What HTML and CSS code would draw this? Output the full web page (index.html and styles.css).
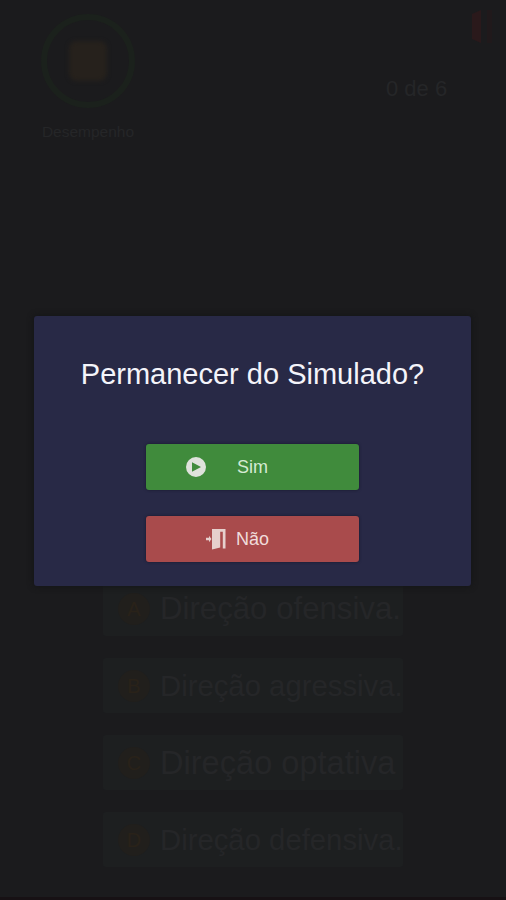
FILE: index.html
```html
<!DOCTYPE html>
<html lang="pt-BR">

<head>
    <meta charset="UTF-8">
    <meta name="viewport" content="width=device-width, initial-scale=1.0">
    <title>Simulado</title>
    <link rel="stylesheet" href="styles.css">
</head>

<body>
    <div class="quiz">
        <header class="top">
            <div class="score">
                <div class="ring">
                    <div class="badge"></div>
                </div>
                <span class="scoreLabel">Desempenho</span>
            </div>
            <div class="status">
                <svg class="exit" viewBox="0 0 24 40">
                    <path d="M2 8l9-4v33l-9-4z" />
                    <path class="frame" d="M17 4h5v33h-5z" />
                </svg>
                <span class="counter">0 de 6</span>
            </div>
        </header>
        <div class="answers">
            <div class="answer"><span class="letter">A</span>Direção ofensiva.</div>
            <div class="answer long"><span class="letter">B</span>Direção agressiva.</div>
            <div class="answer short"><span class="letter">C</span>Direção optativa</div>
            <div class="answer long"><span class="letter">D</span>Direção defensiva.</div>
        </div>
    </div>

    <!-- Exit confirmation -->
    <div class="modal">
        <h1>Permanecer do Simulado?</h1>
        <button class="btn btnYes">
            <svg class="icon play" viewBox="0 0 20 20">
                <path fill-rule="evenodd" d="M10 0a10 10 0 1 0 0 20a10 10 0 1 0 0-20zM6 5.2v9.6l9-4.8z" />
            </svg>
            <span>Sim</span>
        </button>
        <button class="btn btnNo">
            <svg class="icon door" viewBox="0 0 20 22">
                <path d="M0 9.8h3v-2l2.5 3.3-2.5 3.2v-2H0z" />
                <path d="M6 1h13.5v19.5h-2.7V3.8h-2.6v15.8L6 21.5z" />
            </svg>
            <span>Não</span>
        </button>
    </div>
</body>

</html>
```
FILE: styles.css
```css
* {
    box-sizing: border-box;
}

body {
    margin: 0;
    background-color: #1b1b1d;
    color: #252628;
    font-family: "Liberation Sans", Arial, sans-serif;
}

.quiz {
    height: 900px;
    display: flex;
    flex-direction: column;
    justify-content: space-between;
    padding: 6px 12px 30px 40px;
    border-bottom: 3px solid #171114;
    overflow: hidden;
}

.top {
    display: flex;
    justify-content: space-between;
}

.score {
    width: 96px;
    display: flex;
    flex-direction: column;
    align-items: center;
    padding-top: 8px;
}

.ring {
    width: 94px;
    height: 94px;
    display: flex;
    align-items: center;
    justify-content: center;
    border: 6px solid #1b211c;
    border-radius: 50%;
}

.badge {
    width: 38px;
    height: 40px;
    background-color: #26211c;
    border-radius: 8px;
    filter: blur(2px);
}

.scoreLabel {
    margin-top: 15px;
    font-size: 15.5px;
    line-height: 18px;
}

.status {
    width: 108px;
    display: flex;
    flex-direction: column;
}

.exit {
    width: 24px;
    height: 40px;
    align-self: flex-end;
    fill: #2a191b;
}

.exit .frame {
    fill: #20191b;
}

.counter {
    margin-top: 30px;
    font-size: 22px;
    line-height: 26px;
}

.answers {
    width: 300px;
    margin-left: 63px;
    display: flex;
    flex-direction: column;
    gap: 22px;
}

.answer {
    height: 55px;
    display: flex;
    align-items: center;
    padding-left: 15px;
    background-color: #1d1f20;
    border-radius: 3px;
    font-size: 31.2px;
    white-space: nowrap;
}

/* text is sized to fill the row */
.long {
    font-size: 29.3px;
}

.short {
    font-size: 32.6px;
}

.letter {
    width: 32px;
    height: 32px;
    flex-shrink: 0;
    margin-right: 10px;
    background-color: #211f1c;
    border-radius: 50%;
    color: #292219;
    font-size: 20px;
    line-height: 32px;
    text-align: center;
}

.modal {
    position: absolute;
    top: 316px;
    left: 34px;
    width: 437px;
    height: 270px;
    display: flex;
    flex-direction: column;
    align-items: center;
    padding-top: 41px;
    background-color: #282946;
    border-radius: 3px;
    box-shadow: 0 0 6px #121315;
}

.modal h1 {
    margin: 0 0 53px;
    color: #f4f4fa;
    font-size: 29px;
    font-weight: normal;
    line-height: 34px;
    white-space: nowrap;
}

.btn {
    width: 213px;
    height: 46px;
    display: flex;
    flex-shrink: 0;
    align-items: center;
    margin-bottom: 26px;
    padding: 0;
    border: none;
    border-radius: 3px;
    box-shadow: 0 0 3px #17182b;
    font-family: inherit;
    font-size: 18px;
}

.btnYes {
    background-color: #408b3c;
    color: #d5ead3;
}

.btnNo {
    background-color: #a94b4c;
    color: #f0dcdb;
}

.icon {
    fill: #dfe2dc;
}

.play {
    width: 20px;
    height: 20px;
    margin: 0 31px 0 40px;
}

.door {
    width: 20px;
    height: 22px;
    margin: 0 10px 0 60px;
    fill: #e6d0cd;
}
```
